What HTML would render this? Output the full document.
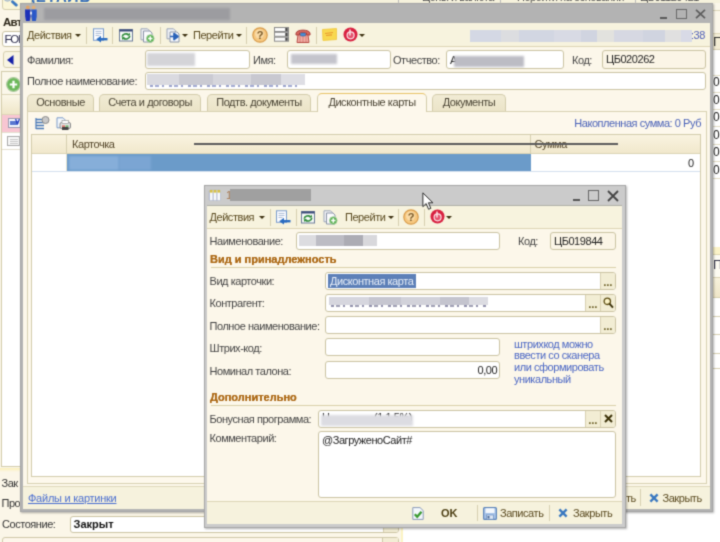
<!DOCTYPE html>
<html><head><meta charset="utf-8">
<style>
*{box-sizing:border-box;margin:0;padding:0}
html,body{width:720px;height:542px;overflow:hidden;background:#fff}
#bg,#w1,#w2{filter:url(#soft)}
body{position:relative;font-family:"Liberation Sans",sans-serif;font-size:11px;color:#444;}
.a{position:absolute}
.t{position:absolute;white-space:nowrap;line-height:13px;letter-spacing:-0.45px}
.inp{position:absolute;background:#fff;border:1px solid #cbc4a3;border-radius:3px}
.ro{background:#fbf5e6}
.btn{position:absolute;background:#f2edd4;border-left:1px solid #d8d1b2;color:#5a4c10;font-weight:bold;font-size:10px;text-align:center;line-height:19px;letter-spacing:.3px}
.sep{position:absolute;width:1px;background:#d6cfb0}
.bl{position:absolute;filter:blur(1.2px)}
.tab{position:absolute;top:94px;height:17px;letter-spacing:-0.450px;color:#4a4434;background:linear-gradient(#f1ebd4,#ebe4c8);border:1px solid #d3ccab;border-bottom:none;border-radius:5px 5px 0 0;text-align:center;line-height:15px;white-space:nowrap}
.tab.act{background:#fdf8ec;top:93px;height:19px;line-height:17px;border-top:1px solid #e8c468}
.sec{position:absolute;white-space:nowrap;font-weight:bold;font-size:11px;color:#ac6814;line-height:13px;text-shadow:0 0 .6px #ac6814}
</style></head><body>
<svg width="0" height="0" style="position:absolute"><filter id="soft" x="0" y="0" width="100%" height="100%" color-interpolation-filters="sRGB"><feConvolveMatrix order="3" kernelMatrix="1 4 1 4 16 4 1 4 1" divisor="36" edgeMode="duplicate" preserveAlpha="false"/></filter></svg>
<!-- ============ BACKGROUND APP ============ -->
<div class="a" id="bg" style="left:0;top:0;width:720px;height:542px;background:#fff;overflow:hidden">
  <!-- top strip -->
  <div class="a" style="left:0;top:0;width:720px;height:4px;background:#f6f2dd"></div>
  <div class="a" style="left:0;top:0;width:200px;height:4px;background:linear-gradient(90deg,#fbf6d2 60%,#f6f2dd)"></div><div class="t" style="left:24px;top:-10px;font-size:15px;font-weight:bold;color:#3a70b8;letter-spacing:1px">ДЕТАЛЬ</div>
  <div class="t" style="left:422px;top:-9px;color:#555">Цены и валюта</div>
  <div class="t" style="left:517px;top:-9px;color:#555">Перейти на основании</div>
  <div class="t" style="left:640px;top:-9px;color:#555">ЦБ01120421</div>
  <div class="a" style="left:398px;top:0;width:1px;height:3px;background:#bbb"></div>
  <div class="a" style="left:500px;top:0;width:1px;height:3px;background:#bbb"></div>
  <div class="a" style="left:635px;top:0;width:1px;height:3px;background:#bbb"></div>
  <!-- left strip -->
  <div class="a" style="left:0;top:0;width:22px;height:542px;background:#fbf6e8"></div>
  <div class="a" style="left:2px;top:-8px;width:30px;height:18px;border:1px solid #d6cfae;border-radius:3px;background:#fbf6d8"></div>
  <svg class="a" style="left:2px;top:-6px" width="17" height="14" viewBox="0 0 17 14"><circle cx="5.500" cy="3" r="4" fill="#f6eeb0" stroke="#a8bcd0" stroke-width="1.300"/><path d="M10.500 7.700l3.800 3.400" stroke="#3a78c0" stroke-width="2.800" stroke-linecap="round"/></svg>
  <div class="t" style="left:3px;top:16px;font-weight:bold;color:#2a2418;letter-spacing:-0.700px;font-size:11.500px">Авт</div>
  <div class="inp" style="left:2px;top:31px;width:30px;height:16px"></div>
  <div class="t" style="left:4.500px;top:32.500px;color:#2a2a4a;font-size:11.500px;letter-spacing:-1.200px">FOI</div>
  <div class="a" style="left:3px;top:51px;width:24px;height:17px;border:1px solid #d6cfae;border-radius:3px;background:#f8f4e2"></div>
  <svg class="a" style="left:7px;top:55px" width="7" height="10" viewBox="0 0 7 10"><path d="M6.500 0v10L0 5z" fill="#1420a8"/></svg>
  <div class="a" style="left:1px;top:71px;width:30px;height:396px;border:1px solid #d3ccab;background:#fff"></div>
  <div class="a" style="left:2px;top:72px;width:20px;height:23px;background:#fbf7ea;border-bottom:1px solid #ddd6b8"></div>
  <svg class="a" style="left:6px;top:76.500px" width="15" height="15" viewBox="0 0 15 15"><circle cx="7.500" cy="7.500" r="6.800" fill="#6cb85a" stroke="#a8c89a" stroke-width="1.200"/><path d="M7.500 3.800v7.400M3.800 7.500h7.400" stroke="#fff" stroke-width="2.200"/></svg>
  <div class="a" style="left:2px;top:95px;width:20px;height:20px;background:linear-gradient(#fbf7e8,#efe6c8);border-bottom:1px solid #ddd6b8"></div>
  <div class="a" style="left:2px;top:115px;width:20px;height:16.500px;background:#f8c6d2"></div>
  <div class="a" style="left:7.500px;top:118px;width:13px;height:10px;background:#f4f6fc;border:1px solid #9a9ab0"></div>
  <div class="a" style="left:10px;top:121px;width:8px;height:4px;background:#5a78d0"></div>
  <div class="t" style="left:15px;top:115px;color:#2038c0;font-size:9px;font-weight:bold">v</div>
  <div class="a" style="left:2px;top:131.500px;width:20px;height:1px;background:#e4e0d0"></div>
  <div class="a" style="left:7px;top:136px;width:13px;height:10px;background:#f8f8f8;border:1px solid #a8a8a8"></div>
  <div class="a" style="left:10px;top:139px;width:8px;height:1px;background:#c8c8c8"></div>
  <div class="a" style="left:10px;top:141px;width:8px;height:1px;background:#c8c8c8"></div>
  <div class="a" style="left:10px;top:143px;width:8px;height:1px;background:#c8c8c8"></div>
  <div class="a" style="left:2px;top:148.500px;width:20px;height:1px;background:#e4e0d0"></div>
  <!-- right strip -->
  <div class="a" style="left:712px;top:4px;width:8px;height:508px;background:#fff"></div>
  <div class="a" style="left:712px;top:3px;width:8px;height:31px;background:#fbf7ea"></div>
  <div class="a" style="left:712px;top:10px;width:8px;height:1px;background:#ddd6b8"></div>
  <div class="a" style="left:712px;top:33px;width:8px;height:17px;background:#f3edd5;border-top:1px solid #e0d9bb;border-bottom:1px solid #d8d1b2"></div>
  <div class="t" style="left:713px;top:35px;font-size:13px;color:#333">П</div>
  <div class="a" style="left:712px;top:74.5px;width:8px;height:1px;background:#e2dcc4"></div><div class="a" style="left:712px;top:91.8px;width:8px;height:1px;background:#e2dcc4"></div><div class="a" style="left:712px;top:109.1px;width:8px;height:1px;background:#e2dcc4"></div><div class="a" style="left:712px;top:126.4px;width:8px;height:1px;background:#e2dcc4"></div><div class="a" style="left:712px;top:143.7px;width:8px;height:1px;background:#e2dcc4"></div><div class="a" style="left:712px;top:161.0px;width:8px;height:1px;background:#e2dcc4"></div><div class="a" style="left:712px;top:178.3px;width:8px;height:1px;background:#e2dcc4"></div>
  <div class="t" style="left:713px;top:74.300px;font-size:12px;color:#222;line-height:17.500px;white-space:pre">0,
0,
0,
0,
0,
0,</div>
  <div class="a" style="left:712px;top:246.500px;width:8px;height:7px;background:#fbf3c8"></div>
  <div class="a" style="left:712px;top:253.500px;width:8px;height:1px;background:#e0d8b0"></div>
  <div class="a" style="left:712px;top:254.500px;width:8px;height:22px;background:#fdfbf2"></div>
  <div class="t" style="left:713px;top:259px;font-size:12.500px;color:#34344a">П</div>
  <div class="a" style="left:712px;top:276.500px;width:8px;height:1px;background:#dcd4b4"></div>
  <div class="a" style="left:712px;top:277.500px;width:8px;height:19.500px;background:linear-gradient(#f8f2dc,#efe6c8)"></div>
  <div class="a" style="left:712px;top:297px;width:8px;height:1px;background:#d8d0b0"></div>
  <div class="a" style="left:712px;top:315.500px;width:8px;height:1px;background:#d8d1b2"></div>
  <div class="a" style="left:712px;top:334px;width:8px;height:1px;background:#d8d1b2"></div>
  <div class="a" style="left:712px;top:353px;width:8px;height:1px;background:#d8d1b2"></div>
  <div class="a" style="left:712px;top:368px;width:8px;height:1px;background:#d8d1b2"></div>
  <!-- bottom strip -->
  <div class="a" style="left:0;top:467px;width:22px;height:80px;background:#fbf6e8"></div><div class="a" style="left:0;top:468px;width:22px;height:4px;background:linear-gradient(#fbefb8,#fbf6e8)"></div>
  <div class="a" style="left:0;top:512px;width:403px;height:30px;background:#fbf6e8;border-right:2px solid #fbf3c4"></div>
  <div class="t" style="left:1.500px;top:476.500px;color:#333">Зак</div>
  <div class="t" style="left:1.500px;top:497px;color:#333">Про</div>
  <div class="t" style="left:2px;top:518px;color:#333">Состояние:</div>
  <div class="inp" style="left:70px;top:516px;width:329px;height:17px;overflow:hidden"><div class="btn" style="right:0;top:0;width:15px;height:16px"></div></div>
  <div class="t" style="left:73.500px;top:518px;color:#111;font-weight:bold;letter-spacing:0">Закрыт</div>
  <div class="a" style="left:2px;top:537px;width:397px;height:14px;border:1px solid #cfc8a8;border-radius:3px;background:#fdf6ea"></div>
  <div class="a" style="left:382px;top:538px;width:16px;height:10px;border-left:1px solid #cfc8a8;background:#f3edd5"></div>
</div>
<!-- ============ OUTER WINDOW ============ -->
<div class="a" id="w1" style="left:0;top:0;width:720px;height:542px">
  <div class="a" style="left:20px;top:3px;width:693px;height:509px;background:#b3b3b3;border:1px solid #a4a4a4;box-shadow:1px 1px 2px rgba(0,0,0,.3)"></div>
  <div class="a" style="left:23px;top:23px;width:687px;height:486px;background:#fcf7ea"></div>
  <!-- title -->
  <svg class="a" style="left:24px;top:5px" width="14" height="17" viewBox="0 0 14 17"><circle cx="3.800" cy="2.500" r="1.900" fill="#e0a468"/><circle cx="9.600" cy="2.500" r="1.900" fill="#e0b078"/><path d="M1 4.500h5.500v7l-.8 4.500H2l-.8-4.500z" fill="#1c30b8"/><path d="M7.200 4.500h5.500v7l-.8 4.500H8.200l-.8-4.500z" fill="#2a58c8"/><path d="M6 8l1 2.500L8 8 7 6z" fill="#fff"/></svg>
  <div class="bl" style="left:44px;top:8px;width:186px;height:12px;background:#9c9ca0"></div>
  <div class="a" style="left:660px;top:17px;width:7px;height:2px;background:#5a5a5a"></div>
  <div class="a" style="left:676px;top:9px;width:11px;height:10px;border:1.5px solid #686868"></div>
  <svg class="a" style="left:695px;top:9px" width="11" height="10" viewBox="0 0 11 10"><path d="M1 .8l9 8.400M10 .8L1 9.200" stroke="#5a5a5a" stroke-width="1.600"/></svg>
  <!-- toolbar -->
  <div class="a" style="left:23px;top:23px;width:687px;height:24px;background:#f7f3de;border-bottom:1px solid #ddd6b6"></div>
  <div class="t" style="left:27px;top:29px;color:#5a4a20">Действия</div>
  <div class="a" style="left:75px;top:34px;border:3px solid transparent;border-top:3px solid #3c3010;border-bottom:none"></div>
  <div class="sep" style="left:86px;top:27px;height:17px"></div>
  <div class="sep" style="left:112px;top:27px;height:17px"></div>
  <div class="sep" style="left:160px;top:27px;height:17px"></div>
  <div class="t" style="left:193px;top:29px;color:#5a4a20">Перейти</div>
  <div class="a" style="left:236px;top:34px;border:3px solid transparent;border-top:3px solid #3c3010;border-bottom:none"></div>
  <div class="sep" style="left:246px;top:27px;height:17px"></div>
  <div class="sep" style="left:316px;top:27px;height:17px"></div>
  <div class="bl" style="left:470px;top:30px;width:222px;height:12px;background:linear-gradient(90deg,#d4d8e4 0 14%,#dcdde0 14% 22%,#d2d6e2 22% 38%,#d8dae4 38% 50%,#d0d4e0 50% 57%,#e2e2de 57% 65%,#d6d8e2 65% 78%,#d0d4e0 78% 88%,#e0e0e0 88% 95%,#d8dae6 95%);filter:blur(.6px)"></div>
  <div class="t" style="left:691px;top:29px;color:#5060b8">:38</div>
  <svg class="a" style="left:92px;top:28px" width="16" height="15" viewBox="0 0 16 15"><rect x="1.500" y=".8" width="10" height="11.500" fill="#fbfcff" stroke="#7a9ccc" stroke-width="1"/><path d="M3.500 3.500h6M3.500 5.500h6M3.500 7.500h4" stroke="#b0c0d8" stroke-width="1"/><path d="M15.500 11.200H8" stroke="#2a6cc0" stroke-width="2.400"/><path d="M9 7.800L4.200 11.200 9 14.600z" fill="#2a6cc0"/></svg>
  <svg class="a" style="left:119px;top:29px" width="14" height="13" viewBox="0 0 14 13"><rect x=".5" y=".5" width="13" height="11.500" fill="#f8fbf8" stroke="#6a7a98" stroke-width="1"/><rect x=".5" y=".5" width="13" height="2" fill="#3a4a78"/><path d="M3.300 7.800a3.700 3 0 0 1 6.400-2" fill="none" stroke="#2e8a3a" stroke-width="1.700"/><path d="M10.700 7a3.700 3 0 0 1-6.400 2" fill="none" stroke="#2e8a3a" stroke-width="1.700"/><path d="M8.300 6.800l3-.3-.6-2.800zM5.700 8l-3 .3.600 2.800z" fill="#2e8a3a"/></svg>
  <svg class="a" style="left:140px;top:28px" width="15" height="15" viewBox="0 0 15 15"><path d="M1 .8h6.500l2 2v9H1z" fill="#f4f4f6" stroke="#9aa4b8" stroke-width="1"/><path d="M3.500 3h6.500l2 2v9H3.500z" fill="#fbfbfd" stroke="#8a94a8" stroke-width="1"/><circle cx="10.300" cy="10.500" r="3.800" fill="#58b050" stroke="#a8d0a0" stroke-width=".8"/><path d="M10.300 8.300v4.400M8.100 10.500h4.400" stroke="#fff" stroke-width="1.500"/></svg>
  <svg class="a" style="left:166px;top:28px" width="16" height="15" viewBox="0 0 16 15"><path d="M1 .8h6.500l2 2v8H1z" fill="#f0f2f6" stroke="#9aa4b8" stroke-width="1"/><path d="M4 4h7l2 2v8H4z" fill="#f8f9fc" stroke="#8a94a8" stroke-width="1"/><path d="M4 8.500h6M8 5.500l4 3-4 3z" fill="#2a62b8" stroke="#2a62b8" stroke-width="1.700" stroke-linejoin="round"/></svg>
  <div class="a" style="left:182px;top:34px;border:3px solid transparent;border-top:3px solid #3c3010;border-bottom:none"></div>
  <svg class="a" style="left:252px;top:27px" width="16" height="16" viewBox="0 0 16 16"><circle cx="8" cy="8" r="7.200" fill="#f6c880" stroke="#d89a48" stroke-width="1.200"/><circle cx="7.500" cy="7" r="4.500" fill="#fbe0b0" opacity=".8"/><text x="8" y="12" text-anchor="middle" font-family="Liberation Sans,sans-serif" font-weight="bold" font-size="11" fill="#7a5a28">?</text></svg>
  <svg class="a" style="left:274px;top:27px" width="15" height="15" viewBox="0 0 15 15"><rect x=".5" y=".5" width="14" height="4" fill="#fcfcfc" stroke="#8a8a8a"/><rect x=".5" y="5.300" width="14" height="4" fill="#fcfcfc" stroke="#8a8a8a"/><rect x=".5" y="10.200" width="14" height="4" fill="#fcfcfc" stroke="#8a8a8a"/><path d="M12.500 1v3M12.500 6v3M12.500 10.800v3" stroke="#444" stroke-width="2.400"/></svg>
  <svg class="a" style="left:295px;top:28px" width="16" height="15" viewBox="0 0 16 15"><path d="M1 5.500C1 1 15 1 15 5.500V7h-3.500V5h-7v2H1z" fill="#d86a60" stroke="#a83a38" stroke-width="1"/><path d="M3 7h10l1 7.500H2z" fill="#f0b0a8" stroke="#b84a44" stroke-width="1"/><path d="M5 8v6M8 8v6M11 8v6" stroke="#d87a70" stroke-width="1"/><rect x="5.500" y="5" width="5" height="3" rx="1" fill="#4a90d8" stroke="#2a5a98" stroke-width=".6"/></svg>
  <svg class="a" style="left:322px;top:28px" width="15" height="13" viewBox="0 0 15 13"><path d="M.5 1.500L14.500.5v11L1 12.500z" fill="#f8d850" stroke="#f0c83a" stroke-width=".8"/><path d="M3 5.500l8-1M4 7.500l6-.6" stroke="#e89a30" stroke-width="1.200"/></svg>
  <svg class="a" style="left:343px;top:27px" width="15" height="15" viewBox="0 0 15 15"><circle cx="7.500" cy="7.500" r="7" fill="#d82040"/><circle cx="7.600" cy="8.300" r="3.500" fill="#e4506c" stroke="#fbe4e8" stroke-width="1.200"/><path d="M7 2.500v6" stroke="#fbe4e8" stroke-width="1.500"/></svg>
  <div class="a" style="left:359px;top:34px;border:3px solid transparent;border-top:3px solid #3c3010;border-bottom:none"></div>
  <!-- row 1 -->
  <div class="t" style="left:27px;top:54px">Фамилия:</div>
  <div class="inp" style="left:145px;top:50px;width:105px;height:19px"></div>
  <div class="bl" style="left:147px;top:53px;width:48px;height:13px;background:#d4d4d8"></div>
  <div class="t" style="left:253px;top:54px">Имя:</div>
  <div class="inp" style="left:287px;top:50px;width:104px;height:19px"></div>
  <div class="bl" style="left:291px;top:54px;width:46px;height:10px;background:#c4c4cc"></div>
  <div class="t" style="left:393px;top:54px">Отчество:</div>
  <div class="inp" style="left:446px;top:50px;width:118px;height:19px"></div>
  <div class="t" style="left:450px;top:54px;color:#222">А</div>
  <div class="bl" style="left:454px;top:56px;width:70px;height:11px;background:#bcbcc4"></div>
  <div class="t" style="left:572px;top:54px">Код:</div>
  <div class="inp ro" style="left:602px;top:50px;width:104px;height:19px"></div>
  <div class="t" style="left:606px;top:53px;color:#222">ЦБ020262</div>
  <!-- row 2 -->
  <div class="t" style="left:27px;top:75px">Полное наименование:</div>
  <div class="inp" style="left:145px;top:72px;width:561px;height:18px"></div>
  <div class="a" style="left:150px;top:84px;width:152px;height:3px;opacity:.5;background:repeating-linear-gradient(90deg,#3a4a9a 0 3px,transparent 3px 5px,#4a5aa8 5px 9px,transparent 9px 12px,#3a4a9a 12px 14px,transparent 14px 19px)"></div><div class="bl" style="left:147px;top:74px;width:158px;height:11px;background:linear-gradient(90deg,#dadae0 0 20%,#cacad2 20% 42%,#d6d6dc 42% 66%,#c8c8d0 66% 85%,#dedee4 85%);filter:blur(.6px)"></div>
  <!-- tabs -->
  <div class="a" style="left:27px;top:111px;width:680px;height:373px;background:#fdf8ec;border:1px solid #d8d1b2"></div>
  <div class="tab" style="left:27px;width:67px">Основные</div>
  <div class="tab" style="left:99px;width:102px">Счета и договоры</div>
  <div class="tab" style="left:207px;width:104px">Подтв. документы</div>
  <div class="tab act" style="left:317px;width:110px">Дисконтные карты</div>
  <div class="tab" style="left:432px;width:74px">Документы</div>
  <!-- panel toolbar -->
  <div class="t" style="left:500px;width:201px;text-align:right;top:117px;color:#4a62b8">Накопленная сумма: 0 Руб</div>
  <svg class="a" style="left:35px;top:116px" width="15" height="14" viewBox="0 0 15 14"><path d="M1 3.500h6M1 6.500h8M1 9.500h8M1 12.500h8" stroke="#4a7ab8" stroke-width="1.600"/><path d="M1 2v11" stroke="#4a7ab8" stroke-width="1.200"/><circle cx="10.500" cy="4" r="3.500" fill="#c8c8c8" stroke="#8a8a8a" stroke-width="1"/></svg>
  <svg class="a" style="left:56px;top:117px" width="15" height="14" viewBox="0 0 15 14"><path d="M1 .8h6l2 2v8H1z" fill="#f4f8fc" stroke="#7a9ac8" stroke-width="1"/><rect x="4" y="5.500" width="10.500" height="6" rx="1.500" fill="#e4e4e4" stroke="#8a8a8a" stroke-width="1"/><rect x="6" y="3.500" width="6.500" height="3" fill="#fff" stroke="#9a9a9a" stroke-width=".7"/><rect x="6" y="10" width="6.500" height="3" fill="#444"/><rect x="6" y="8.500" width="3" height="1.200" fill="#d84a3a"/><rect x="9.500" y="8.500" width="3" height="1.200" fill="#4aa84a"/></svg>
  <!-- table -->
  <div class="a" style="left:31px;top:134px;width:670px;height:343px;background:#fff;border:1px solid #d3ccab"></div>
  <div class="a" style="left:32px;top:135px;width:668px;height:19px;background:linear-gradient(#f9f3e0,#f1e8cc);border-bottom:1px solid #dcd4b4"></div>
  <div class="sep" style="left:66px;top:135px;height:19px"></div>
  <div class="sep" style="left:530px;top:135px;height:19px"></div>
  <div class="t" style="left:72px;top:138px;color:#54462a">Карточка</div>
  <div class="t" style="left:534.500px;top:138px;color:#54462a">Сумма</div>
  <div class="a" style="left:194px;top:143px;width:424px;height:2px;background:#5c5c5c"></div>
  <div class="a" style="left:67px;top:154px;width:463.500px;height:17px;background:#6b9bc9"></div>
  <div class="bl" style="left:69px;top:156px;width:50px;height:14px;background:#86aed9"></div><div class="bl" style="left:119px;top:156px;width:32px;height:14px;background:#7ba5d3"></div>
  <div class="a" style="left:32px;top:171px;width:668px;height:1px;background:#d4e0ee"></div>
  <div class="sep" style="left:66px;top:154px;height:17px;background:#e8e4d0"></div>
  <div class="t" style="left:688px;top:157px;color:#222">0</div>
  <!-- footer -->
  <div class="a" style="left:23px;top:486px;width:687px;height:23px;background:#f6f2dd;border-top:1px solid #e0d9bb"></div>
  <div class="t" style="left:28px;top:492px;color:#4a6ed0;text-decoration:underline;letter-spacing:-0.250px">Файлы и картинки</div>
  <div class="t" style="left:626px;top:492px;color:#5a4a20">ть</div>
  <div class="sep" style="left:640px;top:489px;height:17px"></div>
  <svg class="a" style="left:648.500px;top:493px" width="10" height="10" viewBox="0 0 11 11"><path d="M1.5 1.5l8 8M9.5 1.5l-8 8" stroke="#3a78c0" stroke-width="2.6"/></svg>
  <div class="t" style="left:662.500px;top:492px;color:#5a4a20">Закрыть</div>
</div>
<!-- ============ INNER WINDOW ============ -->
<div class="a" id="w2" style="left:0;top:0;width:720px;height:542px">
  <div class="a" style="left:204px;top:185px;width:422px;height:343px;background:#cbcbcb;border:1px solid #a6a6a6;box-shadow:1px 1px 2px rgba(0,0,0,.3)"></div>
  <div class="a" style="left:207px;top:205px;width:415px;height:319px;background:#fcf7ea;border-top:1px solid #b0b0a8"></div>
  <!-- title -->
  <svg class="a" style="left:208px;top:189px" width="14" height="13" viewBox="0 0 14 13"><rect x=".8" y=".8" width="12" height="11" rx="1.500" fill="#a8b0c8"/><rect x="1.800" y="1" width="2.800" height="10.300" fill="#f8fafc"/><rect x="5.600" y="1" width="2.800" height="10.300" fill="#f8fafc"/><rect x="9.400" y="1" width="2.800" height="10.300" fill="#f8fafc"/><rect x="1.800" y="1" width="2.800" height="2.600" fill="#d8c040"/><rect x="5.600" y="1" width="2.800" height="2.600" fill="#d8c040"/><rect x="9.400" y="1" width="2.800" height="2.600" fill="#d8c040"/></svg>
  <div class="t" style="left:226px;top:189px;color:#a87850">1</div>
  <div class="bl" style="left:230px;top:189px;width:81px;height:12px;background:#a0a0a0;filter:blur(.6px)"></div>
  <div class="a" style="left:573px;top:199px;width:7px;height:2px;background:#555"></div>
  <div class="a" style="left:588px;top:190px;width:11px;height:11px;border:1.5px solid #666"></div>
  <svg class="a" style="left:607px;top:190px" width="12" height="12" viewBox="0 0 12 12"><path d="M1 1l10 10M11 1L1 11" stroke="#444" stroke-width="1.8"/></svg>
  <!-- toolbar -->
  <div class="a" style="left:207px;top:206px;width:415px;height:23px;background:#f7f3de;border-bottom:1px solid #ddd6b6"></div>
  <div class="t" style="left:209.500px;top:211px;color:#5a4a20">Действия</div>
  <div class="a" style="left:259px;top:216px;border:3px solid transparent;border-top:3px solid #3c3010;border-bottom:none"></div>
  <div class="sep" style="left:270px;top:209px;height:17px"></div>
  <div class="sep" style="left:296px;top:209px;height:17px"></div>
  <div class="t" style="left:345px;top:211px;color:#5a4a20">Перейти</div>
  <div class="a" style="left:388px;top:216px;border:3px solid transparent;border-top:3px solid #3c3010;border-bottom:none"></div>
  <div class="sep" style="left:398px;top:209px;height:17px"></div>
  <div class="sep" style="left:424px;top:209px;height:17px"></div>
  <svg class="a" style="left:275px;top:210px" width="16" height="15" viewBox="0 0 16 15"><rect x="1.500" y=".8" width="10" height="11.500" fill="#fbfcff" stroke="#7a9ccc" stroke-width="1"/><path d="M3.500 3.500h6M3.500 5.500h6M3.500 7.500h4" stroke="#b0c0d8" stroke-width="1"/><path d="M15.500 11.200H8" stroke="#2a6cc0" stroke-width="2.400"/><path d="M9 7.800L4.200 11.200 9 14.600z" fill="#2a6cc0"/></svg>
  <svg class="a" style="left:301px;top:211px" width="14" height="13" viewBox="0 0 14 13"><rect x=".5" y=".5" width="13" height="11.500" fill="#f8fbf8" stroke="#6a7a98" stroke-width="1"/><rect x=".5" y=".5" width="13" height="2" fill="#3a4a78"/><path d="M3.300 7.800a3.700 3 0 0 1 6.400-2" fill="none" stroke="#2e8a3a" stroke-width="1.700"/><path d="M10.700 7a3.700 3 0 0 1-6.400 2" fill="none" stroke="#2e8a3a" stroke-width="1.700"/><path d="M8.300 6.800l3-.3-.6-2.800zM5.700 8l-3 .3.600 2.800z" fill="#2e8a3a"/></svg>
  <svg class="a" style="left:323px;top:210px" width="15" height="15" viewBox="0 0 15 15"><path d="M1 .8h6.500l2 2v9H1z" fill="#f4f4f6" stroke="#9aa4b8" stroke-width="1"/><path d="M3.500 3h6.500l2 2v9H3.500z" fill="#fbfbfd" stroke="#8a94a8" stroke-width="1"/><circle cx="10.300" cy="10.500" r="3.800" fill="#58b050" stroke="#a8d0a0" stroke-width=".8"/><path d="M10.300 8.300v4.400M8.100 10.500h4.400" stroke="#fff" stroke-width="1.500"/></svg>
  <svg class="a" style="left:403px;top:209px" width="16" height="16" viewBox="0 0 16 16"><circle cx="8" cy="8" r="7.200" fill="#f6c880" stroke="#d89a48" stroke-width="1.200"/><circle cx="7.500" cy="7" r="4.500" fill="#fbe0b0" opacity=".8"/><text x="8" y="12" text-anchor="middle" font-family="Liberation Sans,sans-serif" font-weight="bold" font-size="11" fill="#7a5a28">?</text></svg>
  <svg class="a" style="left:430px;top:209px" width="15" height="15" viewBox="0 0 15 15"><circle cx="7.500" cy="7.500" r="7" fill="#d82040"/><circle cx="7.600" cy="8.300" r="3.500" fill="#e4506c" stroke="#fbe4e8" stroke-width="1.200"/><path d="M7 2.500v6" stroke="#fbe4e8" stroke-width="1.500"/></svg>
  <div class="a" style="left:446px;top:216px;border:3px solid transparent;border-top:3px solid #3c3010;border-bottom:none"></div>
  <!-- name row -->
  <div class="t" style="left:209.500px;top:235px">Наименование:</div>
  <div class="inp" style="left:296px;top:232px;width:204px;height:18px"></div>
  <div class="bl" style="left:299px;top:235px;width:78px;height:11px;background:linear-gradient(90deg,#dcdce0 0 22%,#bcbcc4 22% 58%,#acacb4 58% 82%,#d8d8dc 82%);filter:blur(.6px)"></div>
  <div class="t" style="left:518px;top:235px">Код:</div>
  <div class="inp ro" style="left:550px;top:232px;width:66px;height:18px"></div>
  <div class="t" style="left:554px;top:235px;color:#222">ЦБ019844</div>
  <!-- section 1 -->
  <div class="sec" style="left:210px;top:253px">Вид и принадлежность</div>
  <div class="a" style="left:211px;top:267px;width:405px;height:1px;background:#d9d0aa"></div>
  <div class="t" style="left:209.500px;top:275px">Вид карточки:</div>
  <div class="inp" style="left:325px;top:272px;width:291px;height:18px;overflow:hidden"><div class="btn" style="right:0;top:0;width:15px;height:16px">...</div></div>
  <div class="a" style="left:328px;top:274px;width:88px;height:14px;background:#5d80b8"></div>
  <div class="t" style="left:330px;top:275px;color:#e8eef8">Дисконтная карта</div>
  <div class="t" style="left:209.500px;top:297px">Контрагент:</div>
  <div class="inp" style="left:325px;top:294px;width:291px;height:18px;overflow:hidden"><div class="btn" style="right:15px;top:0;width:15px;height:16px">...</div><div class="btn" style="right:0;top:0;width:15px;height:16px"></div></div>
  <svg class="a" style="left:603px;top:297px" width="11" height="12" viewBox="0 0 11 12"><circle cx="4.3" cy="4.3" r="3.2" fill="#fbf3c8" stroke="#5a4a10" stroke-width="1.3"/><path d="M6.6 6.8l3.4 3.8" stroke="#3a3008" stroke-width="1.9"/></svg>
  <div class="a" style="left:331px;top:304px;width:155px;height:3px;opacity:.55;background:repeating-linear-gradient(90deg,#3a3a6a 0 3px,transparent 3px 5px,#55557a 5px 9px,transparent 9px 12px,#3a3a6a 12px 14px,transparent 14px 19px)"></div><div class="bl" style="left:329px;top:297px;width:159px;height:8px;background:linear-gradient(90deg,#d6d6de 0 25%,#c6c6d0 25% 45%,#d2d2da 45% 70%,#c4c4ce 70% 88%,#dcdce2 88%);filter:blur(.6px)"></div>
  <div class="t" style="left:209.500px;top:320px">Полное наименование:</div>
  <div class="inp" style="left:325px;top:316px;width:291px;height:18px;overflow:hidden"><div class="btn" style="right:0;top:0;width:15px;height:16px">...</div></div>
  <div class="t" style="left:209.500px;top:342px">Штрих-код:</div>
  <div class="inp" style="left:325px;top:338px;width:175px;height:18px"></div>
  <div class="t" style="left:209.500px;top:365px">Номинал талона:</div>
  <div class="inp" style="left:325px;top:361px;width:175px;height:18px"></div>
  <div class="t" style="left:477.500px;top:364px;color:#222">0,00</div>
  <div class="t" style="left:514px;top:338.500px;color:#4a66c4;white-space:pre;line-height:11.800px">штрихкод можно
ввести со сканера
или сформировать
уникальный</div>
  <!-- section 2 -->
  <div class="sec" style="left:210px;top:391px">Дополнительно</div>
  <div class="a" style="left:211px;top:405px;width:405px;height:1px;background:#d9d0aa"></div>
  <div class="t" style="left:209.500px;top:413px">Бонусная программа:</div>
  <div class="inp" style="left:318px;top:410px;width:298px;height:18px;overflow:hidden"><div class="btn" style="right:15px;top:0;width:15px;height:16px">...</div><div class="btn" style="right:0;top:0;width:15px;height:16px"></div></div>
  <svg class="a" style="left:604px;top:414px" width="9" height="9" viewBox="0 0 9 9"><path d="M1 1l7 7M8 1L1 8" stroke="#3a3008" stroke-width="2"/></svg>
  <div class="t" style="left:322px;top:411px;color:#222">Н</div>
  <div class="t" style="left:374px;top:411px;color:#222">(1.1.5%)</div>
  <div class="bl" style="left:321px;top:415px;width:92px;height:11px;background:#dcdce2"></div>
  <div class="t" style="left:209.500px;top:432px">Комментарий:</div>
  <div class="inp" style="left:318px;top:431px;width:298px;height:67px"></div>
  <div class="t" style="left:322px;top:434px;color:#222">@ЗагруженоСайт#</div>
  <!-- footer -->
  <div class="a" style="left:207px;top:501px;width:415px;height:23px;background:#f6f2dd;border-top:1px solid #ddd6b6"></div>
  <svg class="a" style="left:412px;top:507px" width="12" height="13" viewBox="0 0 12 13"><path d="M.8.600h7.200l3.200 3v8.800H.8z" fill="#f4f8fc" stroke="#8a9ab8" stroke-width="1"/><path d="M2.800 7.200l2.400 2.600 4.300-5" fill="none" stroke="#3a9a30" stroke-width="2.300"/></svg>
  <svg class="a" style="left:483px;top:507px" width="14" height="13" viewBox="0 0 14 13"><rect x=".6" y=".6" width="12.800" height="11.800" rx="1" fill="#a8c4e8" stroke="#5a82b8" stroke-width="1.100"/><rect x="2.500" y="1.200" width="9" height="4.800" fill="#f4f8fc"/><rect x="3.500" y="8" width="7" height="4.200" fill="#dde6f2" stroke="#5a82b8" stroke-width=".6"/><rect x="4.500" y="9" width="2" height="2.500" fill="#4a6a98"/></svg>
  <div class="t" style="left:441px;top:507px;color:#4a3c10;font-weight:bold;letter-spacing:0;font-size:11px">OK</div>
  <div class="sep" style="left:477px;top:505px;height:16px"></div>
  <div class="t" style="left:500px;top:507px;color:#5a4a20">Записать</div>
  <div class="sep" style="left:549px;top:505px;height:16px"></div>
  <svg class="a" style="left:558px;top:508px" width="10" height="10" viewBox="0 0 11 11"><path d="M1.5 1.5l8 8M9.5 1.5l-8 8" stroke="#3a78c0" stroke-width="2.6"/></svg>
  <div class="t" style="left:573px;top:507px;color:#5a4a20">Закрыть</div>
  <!-- cursor -->
  <svg class="a" style="left:421.500px;top:191.500px" width="13" height="19" viewBox="0 0 15 22"><path d="M1 1v16l3.8-3.6 2.8 6.6 2.6-1.1-2.8-6.4h5.2z" fill="#fff" stroke="#222" stroke-width="1.1" stroke-linejoin="round"/></svg>
</div>
</body></html>
